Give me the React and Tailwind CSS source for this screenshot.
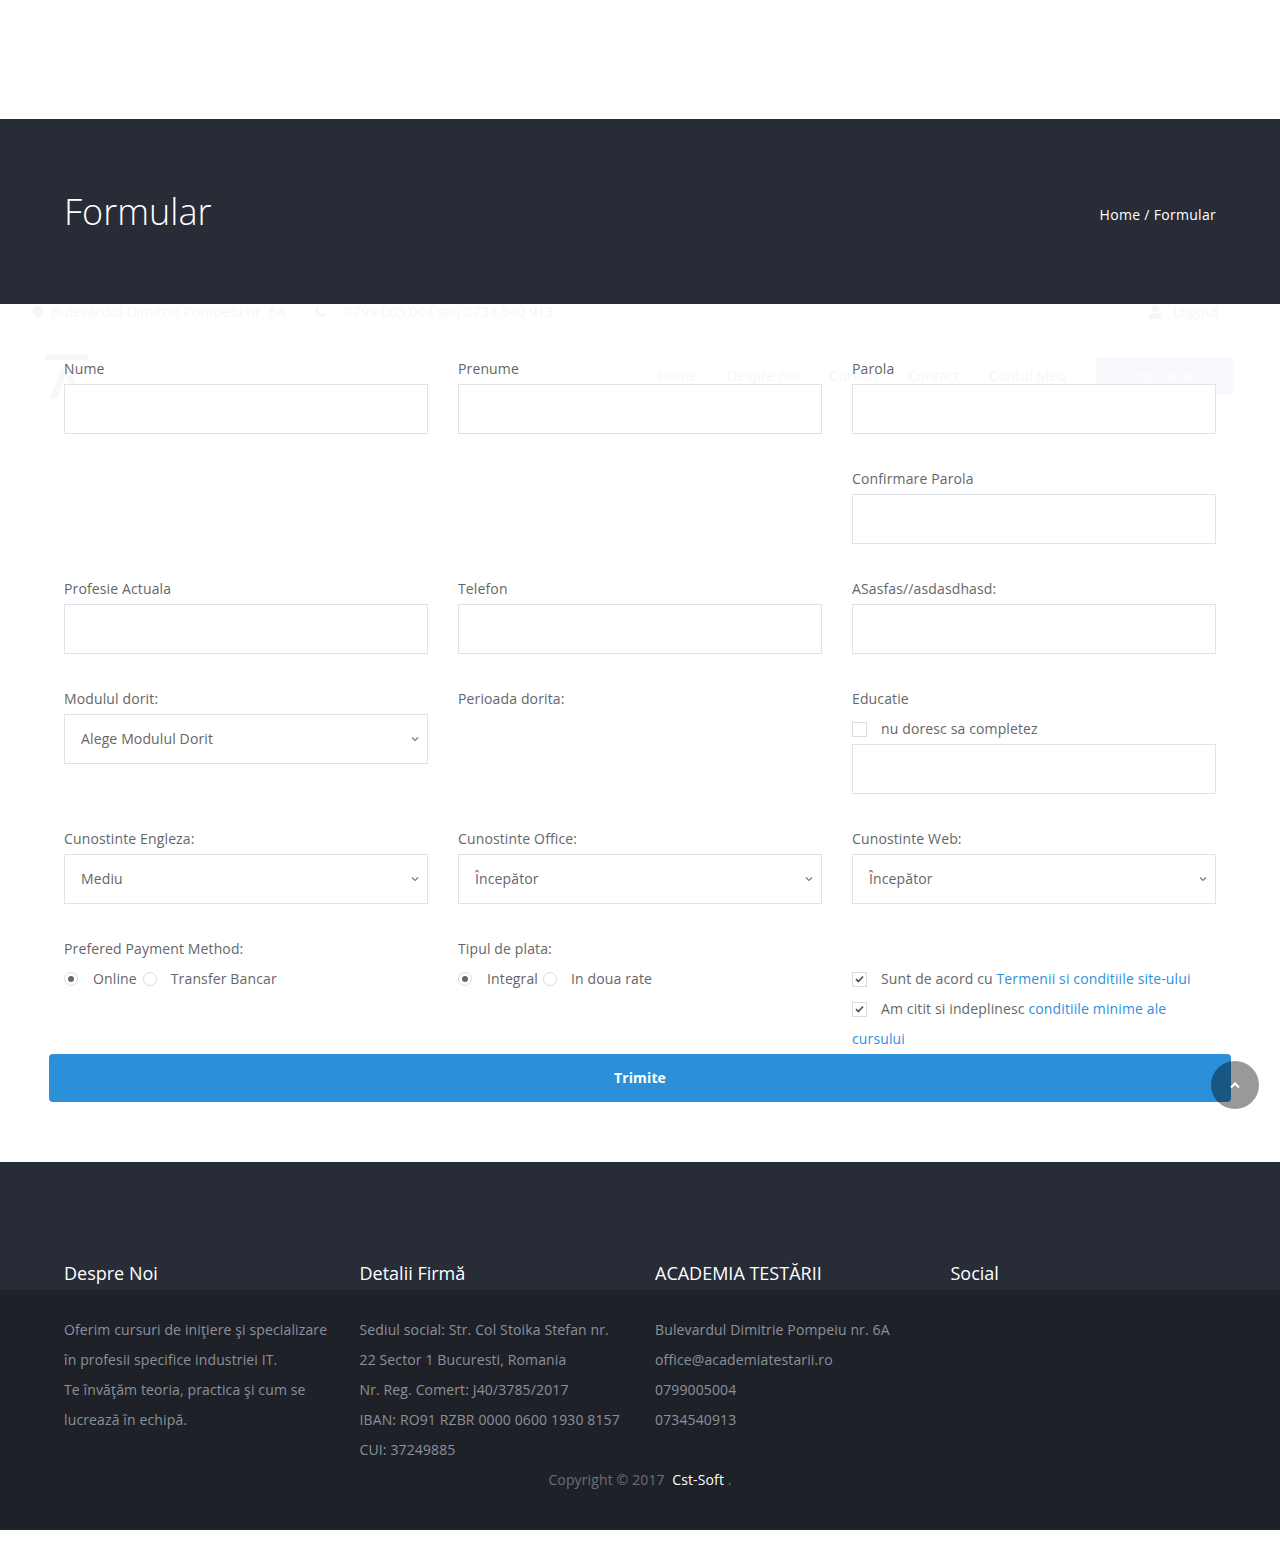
import { useState } from "react";

const Label = ({ children }) => (
  <label className="block text-sm leading-5 text-[#666] mb-[5px]">{children}</label>
);

const Input = ({ type = "text" }) => (
  <input
    type={type}
    className="block w-full h-[50px] border border-[#dfe3e8] bg-white px-4 text-sm text-[#555] outline-none"
  />
);

const Select = ({ options, value }) => (
  <div className="relative">
    <select
      defaultValue={value}
      className="block w-full h-[50px] appearance-none border border-[#dfe3e8] bg-white pl-4 pr-8 text-sm text-[#666] outline-none"
    >
      {options.map((o) => (
        <option key={o}>{o}</option>
      ))}
    </select>
    <svg
      className="pointer-events-none absolute right-[9px] top-[22px]"
      width="8"
      height="6"
      viewBox="0 0 8 6"
      fill="none"
    >
      <path d="M1 1.5l3 3 3-3" stroke="#777" strokeWidth="1.1" />
    </svg>
  </div>
);

const Radio = ({ checked, onClick }) => (
  <span
    onClick={onClick}
    className="inline-flex items-center justify-center w-[14px] h-[14px] rounded-full border border-[#dcdcdc] bg-white cursor-pointer"
  >
    {checked && <span className="w-[6px] h-[6px] rounded-full bg-[#666]" />}
  </span>
);

const Check = ({ checked, onClick }) => (
  <span
    onClick={onClick}
    className="inline-flex items-center justify-center w-[15px] h-[15px] border border-[#dcdcdc] bg-white cursor-pointer shrink-0"
  >
    {checked && (
      <svg width="9" height="8" viewBox="0 0 9 8" fill="none">
        <path d="M1 4.2l2.4 2.3L8 1.5" stroke="#555" strokeWidth="1.8" />
      </svg>
    )}
  </span>
);

const Field = ({ label, children }) => (
  <div className="mb-[35px]">
    <Label>{label}</Label>
    {children}
  </div>
);

const App = () => {
  const [payment, setPayment] = useState("online");
  const [tip, setTip] = useState("integral");
  const [noEdu, setNoEdu] = useState(false);
  const [terms, setTerms] = useState(true);
  const [minime, setMinime] = useState(true);

  const levels = ["Începător", "Mediu", "Avansat"];

  return (
    <div className="relative bg-white font-['Open_Sans',sans-serif] tracking-[0.13px]">
      <div className="h-[119px]" />

      {/* page banner */}
      <div className="bg-[#282c37] h-[185px]">
        <div className="w-[1152px] mx-auto h-full flex items-center justify-between">
          <h1 className="text-[36px] font-light text-white leading-none tracking-normal">Formular</h1>
          <div className="text-sm text-white mt-[6px] tracking-[0.3px]">
            <a href="#">Home</a> / <span>Formular</span>
          </div>
        </div>
      </div>

      {/* faded header ghost */}
      <div className="absolute left-0 top-[298px] w-full h-[100px] pointer-events-none z-0 text-[#f5f6f9] text-sm">
        <div className="flex items-center h-[28px] pl-[33px]">
          <svg width="10" height="13" viewBox="0 0 10 13" className="mr-[8px]">
            <path d="M5 0a5 5 0 0 0-5 5c0 3.5 5 8 5 8s5-4.5 5-8a5 5 0 0 0-5-5z" fill="#f5f6f9" />
          </svg>
          <span>Bulevardul Dimitrie Pompeiu nr. 6A</span>
          <svg width="12" height="12" viewBox="0 0 12 12" className="ml-[28px] mr-[19px]">
            <path d="M2 1l2 0 1 3-1.5 1a7 7 0 0 0 3.5 3.5L8 7l3 1v2a1 1 0 0 1-1 1A9 9 0 0 1 1 2a1 1 0 0 1 1-1z" fill="#f5f6f9" />
          </svg>
          <span>0799 005 004 sau 0734 540 913</span>
          <svg width="14" height="14" viewBox="0 0 14 14" className="ml-auto mr-[11px]">
            <circle cx="7" cy="4" r="3.5" fill="#f5f6f9" />
            <path d="M0 14a7 6 0 0 1 14 0z" fill="#f5f6f9" />
          </svg>
          <span className="mr-[61px]">Logout</span>
        </div>
        <div className="flex items-center h-[56px] mt-[22px]">
          <svg width="43" height="45" viewBox="0 0 43 45" className="ml-[45px]">
            <rect x="0" y="0" width="43" height="6" fill="#f7f8fa" />
            <path d="M21 6L4 45h8l9-24 9 24h8z" fill="#f7f8fa" />
          </svg>
          <div className="ml-auto flex gap-[30px] mr-[46px] items-center">
            <span>Home</span>
            <span>Despre noi</span>
            <span>Cursuri</span>
            <span>Contact</span>
            <span>Contul Meu</span>
            <span className="w-[138px] h-[38px] rounded bg-[#f7f9fc] flex items-center justify-center text-white">
              Inscrie-te
            </span>
          </div>
        </div>
      </div>

      {/* form */}
      <form className="relative z-10 pt-[55px] pb-[60px]" onSubmit={(e) => e.preventDefault()}>
        <div className="w-[1152px] mx-auto grid grid-cols-3 gap-x-[30px]">
          <Field label="Nume"><Input /></Field>
          <Field label="Prenume"><Input /></Field>
          <Field label="Parola"><Input type="password" /></Field>

          <div />
          <div />
          <Field label="Confirmare Parola"><Input type="password" /></Field>

          <Field label="Profesie Actuala"><Input /></Field>
          <Field label="Telefon"><Input /></Field>
          <Field label="ASasfas//asdasdhasd:"><Input /></Field>

          <Field label="Modulul dorit:">
            <Select options={["Alege Modulul Dorit"]} value="Alege Modulul Dorit" />
          </Field>
          <Field label="Perioada dorita:"><div /></Field>
          <div className="mb-[35px]">
            <Label>Educatie</Label>
            <div className="flex items-center h-[30px] gap-[14px]">
              <Check checked={noEdu} onClick={() => setNoEdu(!noEdu)} />
              <span className="text-sm text-[#666]">nu doresc sa completez</span>
            </div>
            <Input />
          </div>

          <Field label="Cunostinte Engleza:"><Select options={levels} value="Mediu" /></Field>
          <Field label="Cunostinte Office:"><Select options={levels} value="Începător" /></Field>
          <Field label="Cunostinte Web:"><Select options={levels} value="Începător" /></Field>

          <div>
            <Label>Prefered Payment Method:</Label>
            <div className="flex items-center h-[30px] text-sm text-[#666]">
              <Radio checked={payment === "online"} onClick={() => setPayment("online")} />
              <span className="ml-[15px] mr-[6px]">Online</span>
              <Radio checked={payment === "transfer"} onClick={() => setPayment("transfer")} />
              <span className="ml-[14px]">Transfer Bancar</span>
            </div>
          </div>
          <div>
            <Label>Tipul de plata:</Label>
            <div className="flex items-center h-[30px] text-sm text-[#666]">
              <Radio checked={tip === "integral"} onClick={() => setTip("integral")} />
              <span className="ml-[15px] mr-[5px]">Integral</span>
              <Radio checked={tip === "rate"} onClick={() => setTip("rate")} />
              <span className="ml-[14px]">In doua rate</span>
            </div>
          </div>
          <div className="pt-[25px] text-sm leading-[30px] text-[#666]">
            <div className="flex items-center gap-[14px]">
              <Check checked={terms} onClick={() => setTerms(!terms)} />
              <span>
                Sunt de acord cu <a href="#" className="text-[#2f8fdc]">Termenii si conditiile site-ului</a>
              </span>
            </div>
            <div className="flex items-center gap-[14px]">
              <Check checked={minime} onClick={() => setMinime(!minime)} />
              <span>
                Am citit si indeplinesc <a href="#" className="text-[#2f8fdc]">conditiile minime ale</a>
              </span>
            </div>
            <div>
              <a href="#" className="text-[#2f8fdc]">cursului</a>
            </div>
          </div>
        </div>

        <div className="w-[1182px] mx-auto">
          <button
            type="submit"
            className="w-full h-[48px] rounded-[4px] bg-[#2b8fd9] text-white text-sm font-bold"
          >
            Trimite
          </button>
        </div>
      </form>

      {/* scroll to top */}
      <button
        type="button"
        className="absolute z-20 left-[1211px] top-[1061px] w-[48px] h-[48px] rounded-full bg-black/40 flex items-center justify-center"
      >
        <svg width="12" height="8" viewBox="0 0 12 8" fill="none">
          <path d="M2 6.5l4-4 4 4" stroke="#fff" strokeWidth="2" />
        </svg>
      </button>

      {/* footer */}
      <footer>
        <div className="bg-[#282c37] h-[128px] flex items-end">
          <div className="w-[1182px] mx-auto grid grid-cols-4 pb-[5px]">
            {["Despre Noi", "Detalii Firmă", "ACADEMIA TESTĂRII", "Social"].map((h) => (
              <h4 key={h} className="px-[15px] text-lg leading-6 text-white tracking-normal">{h}</h4>
            ))}
          </div>
        </div>
        <div className="bg-[#1f2129] pt-[25px] pb-[35px] text-sm leading-[30px] text-[#8c9199]">
          <div className="w-[1182px] mx-auto grid grid-cols-4">
            <div className="px-[15px] whitespace-nowrap">
              <p>Oferim cursuri de iniţiere şi specializare</p>
              <p>în profesii specifice industriei IT.</p>
              <p>Te învăţăm teoria, practica şi cum se</p>
              <p>lucrează în echipă.</p>
            </div>
            <div className="px-[15px] whitespace-nowrap">
              <p>Sediul social: Str. Col Stoika Stefan nr.</p>
              <p>22 Sector 1 Bucuresti, Romania</p>
              <p>Nr. Reg. Comert: J40/3785/2017</p>
              <p>IBAN: RO91 RZBR 0000 0600 1930 8157</p>
              <p>CUI: 37249885</p>
            </div>
            <div className="px-[15px] whitespace-nowrap">
              <p>Bulevardul Dimitrie Pompeiu nr. 6A</p>
              <p>office@academiatestarii.ro</p>
              <p>0799005004</p>
              <p>0734540913</p>
            </div>
            <div className="px-[15px]" />
          </div>
          <p className="text-center text-[#6b6f78]">
            Copyright © 2017&nbsp; <a href="#" className="text-white">Cst-Soft</a> .
          </p>
        </div>
      </footer>
      <div className="h-[35px]" />
    </div>
  );
};

export default App;
